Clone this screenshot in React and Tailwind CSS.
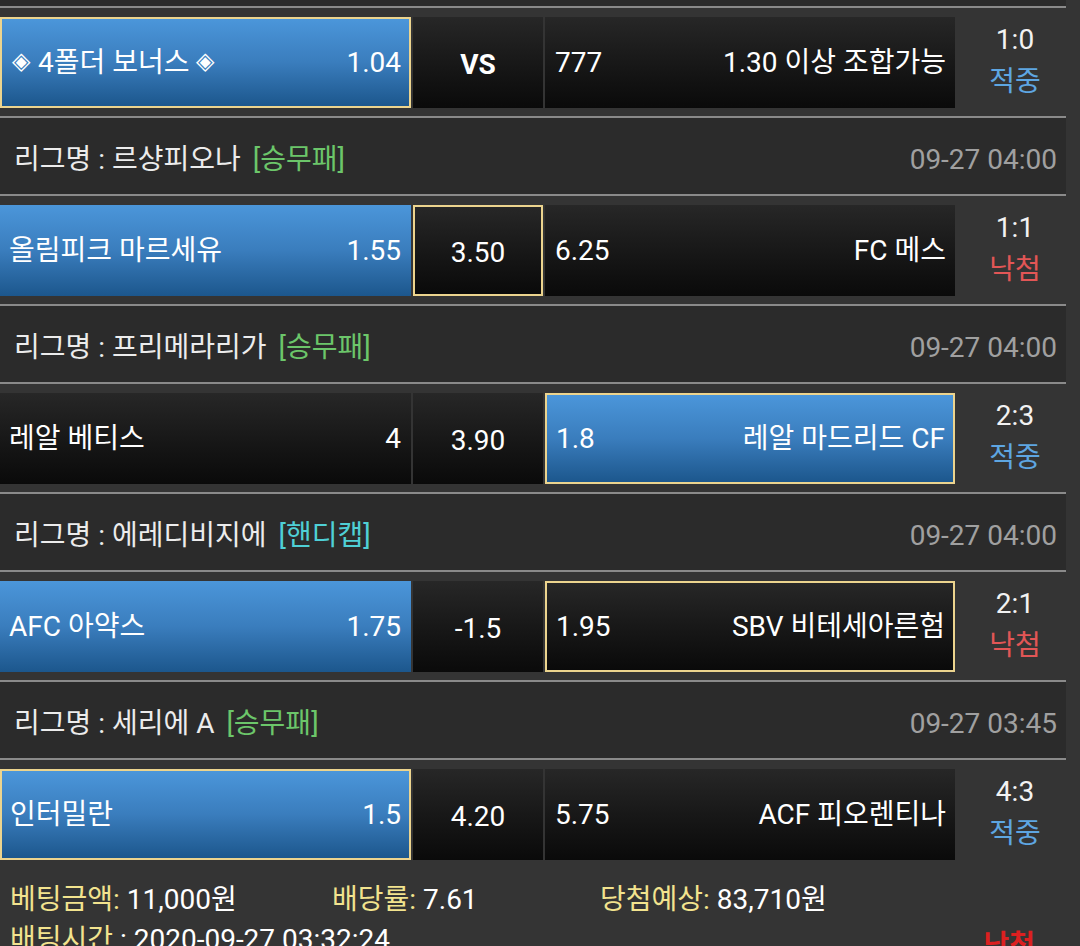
import React from "react";

const FONT = "font-['Roboto','Noto_Sans_CJK_KR',sans-serif]";

function Cell({ variant, gold, className = "", children }) {
  const bg =
    variant === "blue"
      ? "bg-linear-to-b from-[#4b96da] via-[#3a7dbd] to-[#1c578d]"
      : "bg-linear-to-b from-[#272727] to-[#0a0a0a]";
  const border = gold ? "border-2 border-[#ecd48e]" : "";
  return (
    <div className={`h-[91px] flex items-center text-white ${bg} ${border} ${className}`}>
      {children}
    </div>
  );
}

function Divider() {
  return <div className="h-[2px] bg-[#8a8a8a] mr-[14px]" />;
}

function Header({ league, type, typeColor, date }) {
  return (
    <>
      <Divider />
      <div className="h-[76px] bg-[#2b2b2b] mr-[14px] flex items-center justify-between pl-[14px] pr-[9px] pt-[8px]">
        <div className="text-[#ececec]">
          리그명 : {league} <span className={`ml-[5px] ${typeColor}`}>[{type}]</span>
        </div>
        <div className="text-[#a0a0a0]">{date}</div>
      </div>
    </>
  );
}

function Match({ left, mid, right, score, result }) {
  return (
    <>
      <Divider />
      <div className="flex pt-[9px] pb-[8px]">
        <Cell
          variant={left.blue ? "blue" : "dark"}
          gold={left.gold}
          className={`w-[411px] justify-between ${left.gold ? "pl-[8px] pr-[8px]" : "pl-[9px] pr-[10px]"}`}
        >
          <span>{left.name}</span>
          <span>{left.odds}</span>
        </Cell>
        <Cell
          variant="dark"
          gold={mid.gold}
          className={`w-[130px] ml-[2px] justify-center pt-[4px] ${mid.bold ? "font-bold" : ""}`}
        >
          {mid.text}
        </Cell>
        <Cell
          variant={right.blue ? "blue" : "dark"}
          gold={right.gold}
          className={`w-[410px] ml-[2px] justify-between ${right.gold ? "pl-[9px] pr-[8px]" : "pl-[10px] pr-[9px]"}`}
        >
          <span>{right.odds}</span>
          <span>{right.name}</span>
        </Cell>
        <div className="w-[120px] flex flex-col items-center justify-center leading-[42px] pb-[4px]">
          <span className="text-[#f2f2f2]">{score}</span>
          <span className={result === "적중" ? "text-[#5ea6e2]" : "text-[#e25656]"}>{result}</span>
        </div>
      </div>
    </>
  );
}

export default function App() {
  return (
    <div className={`w-[1080px] h-[946px] overflow-hidden bg-[#343434] text-[28px] ${FONT}`}>
      <div className="h-[6px] bg-[#2b2b2b] mr-[14px]" />
      <Match
        left={{
          blue: true,
          gold: true,
          name: (
            <>
              <span className="text-[24px] align-[3px] ml-[2px] mr-[1px]">◈</span> 4폴더 보너스{" "}
              <span className="text-[24px] align-[3px]">◈</span>
            </>
          ),
          odds: "1.04",
        }}
        mid={{ text: "VS", bold: true }}
        right={{ odds: "777", name: "1.30 이상 조합가능" }}
        score="1:0"
        result="적중"
      />
      <Header league="르샹피오나" type="승무패" typeColor="text-[#6cc66a]" date="09-27 04:00" />
      <Match
        left={{ blue: true, name: "올림피크 마르세유", odds: "1.55" }}
        mid={{ text: "3.50", gold: true }}
        right={{ odds: "6.25", name: "FC 메스" }}
        score="1:1"
        result="낙첨"
      />
      <Header league="프리메라리가" type="승무패" typeColor="text-[#6cc66a]" date="09-27 04:00" />
      <Match
        left={{ name: "레알 베티스", odds: "4" }}
        mid={{ text: "3.90" }}
        right={{ blue: true, gold: true, odds: "1.8", name: "레알 마드리드 CF" }}
        score="2:3"
        result="적중"
      />
      <Header league="에레디비지에" type="핸디캡" typeColor="text-[#4fd0d6]" date="09-27 04:00" />
      <Match
        left={{ blue: true, name: "AFC 아약스", odds: "1.75" }}
        mid={{ text: "-1.5" }}
        right={{ gold: true, odds: "1.95", name: "SBV 비테세아른험" }}
        score="2:1"
        result="낙첨"
      />
      <Header league="세리에 A" type="승무패" typeColor="text-[#6cc66a]" date="09-27 03:45" />
      <Match
        left={{ blue: true, gold: true, name: "인터밀란", odds: "1.5" }}
        mid={{ text: "4.20" }}
        right={{ odds: "5.75", name: "ACF 피오렌티나" }}
        score="4:3"
        result="적중"
      />
      <div className="pt-[12px] pl-[10px] leading-[40px] text-white">
        <div className="flex">
          <div className="w-[322px]">
            <span className="text-[#f2e38e]">베팅금액:</span> 11,000원
          </div>
          <div className="w-[268px]">
            <span className="text-[#f2e38e]">배당률:</span> 7.61
          </div>
          <div>
            <span className="text-[#f2e38e]">당첨예상:</span> 83,710원
          </div>
        </div>
        <div className="flex justify-between pr-[45px]">
          <div>
            <span className="text-[#f2e38e]">배팅시간</span> : 2020-09-27 03:32:24
          </div>
          <div className="text-[#dc2020] font-bold pt-[6px]">낙첨</div>
        </div>
      </div>
    </div>
  );
}
